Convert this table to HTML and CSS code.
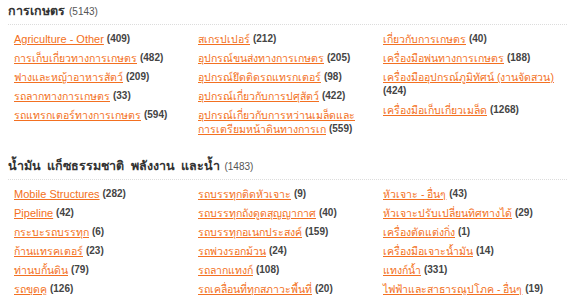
FILE: index.html
```html
<!DOCTYPE html>
<html>
<head>
<meta charset="utf-8">
<link rel="stylesheet" href="styles.css">
</head>
<body>
<section class="cat">
  <h2 class="cat-title"><span class="cat-name">การเกษตร</span> <span class="cat-count">(5143)</span></h2>
  <div class="grid">
    <ul class="col">
      <li><a class="en" href="#">Agriculture - Other</a> <span class="n">(409)</span></li>
      <li><a href="#">การเก็บเกี่ยวทางการเกษตร</a> <span class="n">(482)</span></li>
      <li><a href="#">ฟางและหญ้าอาหารสัตว์</a> <span class="n">(209)</span></li>
      <li><a href="#">รถลากทางการเกษตร</a> <span class="n">(33)</span></li>
      <li><a href="#">รถแทรกเตอร์ทางการเกษตร</a> <span class="n">(594)</span></li>
    </ul>
    <ul class="col">
      <li><a href="#">สเกรปเปอร์</a> <span class="n">(212)</span></li>
      <li><a href="#">อุปกรณ์ขนส่งทางการเกษตร</a> <span class="n">(205)</span></li>
      <li><a href="#">อุปกรณ์ยึดติดรถแทรกเตอร์</a> <span class="n">(98)</span></li>
      <li><a href="#">อุปกรณ์เกี่ยวกับการปศุสัตว์</a> <span class="n">(422)</span></li>
      <li><a href="#">อุปกรณ์เกี่ยวกับการหว่านเมล็ดและ<br>การเตรียมหน้าดินทางการเก</a> <span class="n">(559)</span></li>
    </ul>
    <ul class="col">
      <li><a href="#">เกี่ยวกับการเกษตร</a> <span class="n">(40)</span></li>
      <li><a href="#">เครื่องมือพ่นทางการเกษตร</a> <span class="n">(188)</span></li>
      <li><a class="keep" href="#">เครื่องมืออุปกรณ์ภูมิทัศน์ (งานจัดสวน)</a><br><span class="n">(424)</span></li>
      <li><a href="#">เครื่องมือเก็บเกี่ยวเมล็ด</a> <span class="n">(1268)</span></li>
    </ul>
  </div>
</section>
<section class="cat">
  <h2 class="cat-title"><span class="cat-name">น้ำมัน แก็ซธรรมชาติ พลังงาน และน้ำ</span> <span class="cat-count">(1483)</span></h2>
  <div class="grid">
    <ul class="col">
      <li><a class="en" href="#">Mobile Structures</a> <span class="n">(282)</span></li>
      <li><a class="en" href="#">Pipeline</a> <span class="n">(42)</span></li>
      <li><a href="#">กระบะรถบรรทุก</a> <span class="n">(6)</span></li>
      <li><a href="#">ก้านแทรคเตอร์</a> <span class="n">(23)</span></li>
      <li><a href="#">ท่านบกั้นดิน</a> <span class="n">(79)</span></li>
      <li><a href="#">รถขุดคู</a> <span class="n">(126)</span></li>
    </ul>
    <ul class="col">
      <li><a href="#">รถบรรทุกติดหัวเจาะ</a> <span class="n">(9)</span></li>
      <li><a href="#">รถบรรทุกถังดูดสุญญากาศ</a> <span class="n">(40)</span></li>
      <li><a href="#">รถบรรทุกอเนกประสงค์</a> <span class="n">(159)</span></li>
      <li><a href="#">รถพ่วงรอกม้วน</a> <span class="n">(24)</span></li>
      <li><a href="#">รถลากแทงก์</a> <span class="n">(108)</span></li>
      <li><a href="#">รถเคลื่อนที่ทุกสภาวะพื้นที่</a> <span class="n">(20)</span></li>
    </ul>
    <ul class="col">
      <li><a href="#">หัวเจาะ - อื่นๆ</a> <span class="n">(43)</span></li>
      <li><a href="#">หัวเจาะปรับเปลี่ยนทิศทางได้</a> <span class="n">(29)</span></li>
      <li><a href="#">เครื่องตัดแต่งกิ่ง</a> <span class="n">(1)</span></li>
      <li><a href="#">เครื่องมือเจาะน้ำมัน</a> <span class="n">(14)</span></li>
      <li><a href="#">แทงก์น้ำ</a> <span class="n">(331)</span></li>
      <li><a href="#">ไฟฟ้าและสาธารณูปโภค - อื่นๆ</a> <span class="n">(19)</span></li>
    </ul>
  </div>
</section>
</body>
</html>
```
FILE: styles.css
```css
html, body { margin: 0; padding: 0; background: #fff; }
body {
  font-family: "Liberation Sans", Arial, sans-serif;
  font-size: 10.5px;
  color: #333;
  padding: 2px 8px 0 8px;
}
.cat { margin-bottom: 16px; }
.cat-title {
  margin: 0;
  height: 18px;
  overflow: visible;
  display: flex;
  align-items: baseline;
  gap: 4px;
  font-size: 12.5px;
  font-weight: bold;
  word-spacing: 3px;
  color: #333;
  line-height: 18px;
  padding-bottom: 4px;
  border-bottom: 1px dotted #dcdcdc;
}
.cat-count { font-size: 10px; font-weight: normal; color: #555; word-spacing: 0; }
.grid {
  display: grid;
  grid-template-columns: 184px 185px 1fr;
  padding: 7px 0 0 6px;
}
.col { list-style: none; margin: 0; padding: 0; }
.col li { line-height: 14px; height: auto; margin-bottom: 5px; padding-right: 4px; }
.col a { color: #f37021; text-decoration: underline; vertical-align: top; }
.col a.en { font-size: 11px; }
.col a.keep { white-space: nowrap; }
.n { font-weight: bold; color: #444; font-size: 10px; vertical-align: top; }
```
